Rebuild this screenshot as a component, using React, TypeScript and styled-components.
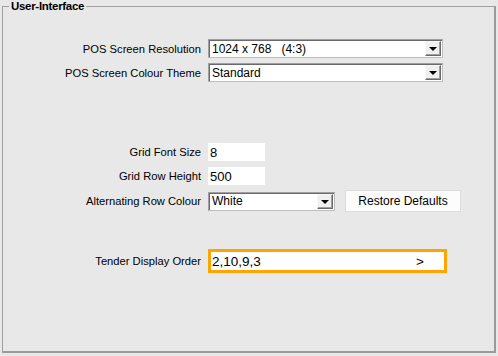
import styled, { createGlobalStyle } from "styled-components";

const GlobalStyle = createGlobalStyle`
    html, body {
        margin: 0;
        padding: 0;
        background: #e8e8e8;
    }
    body {
        font-family: "Liberation Sans", Arial, sans-serif;
        font-size: 12px;
        color: #000;
    }
`;

const Page = styled.div`
    width: 498px;
    height: 356px;
    padding: 0 2px 0 2px;
    box-sizing: border-box;
    overflow: hidden;
`;

const Group = styled.fieldset`
    margin: 0;
    padding: 0;
    width: 494px;
    height: 353px;
    box-sizing: border-box;
    border: 1px solid #a0a0a0;
    border-right: 2px solid #9a9a9a;
    border-bottom: 2px solid #9a9a9a;
    min-width: 0;
`;

const Legend = styled.legend`
    margin-left: 6px;
    padding: 0 2px 0 2px;
    font-size: 11.5px;
    font-weight: bold;
    line-height: 13px;
    letter-spacing: -0.3px;
`;

const Form = styled.div`
    display: flex;
    flex-direction: column;
`;

const Row = styled.div<{ $top: number; $h: number }>`
    display: flex;
    align-items: center;
    margin-top: ${(p) => p.$top}px;
    height: ${(p) => p.$h}px;
`;

const Label = styled.div`
    width: 205px;
    padding-right: 7px;
    box-sizing: border-box;
    text-align: right;
    font-size: 11.2px;
    white-space: nowrap;
`;

const Select = styled.div<{ $w: number }>`
    display: flex;
    align-items: stretch;
    width: ${(p) => p.$w}px;
    height: 19px;
    box-sizing: border-box;
    background: #fff;
    border: 1px solid #a0a0a0;
    border-right-color: #bcbcbc;
    border-bottom-color: #bcbcbc;
    box-shadow: inset 1px 1px 0 #6a6a6a;
`;

const SelectText = styled.div`
    flex: 1;
    padding: 0 0 0 3px;
    display: flex;
    align-items: center;
    white-space: pre;
    font-size: 12px;
`;

const DropButton = styled.div`
    width: 16px;
    margin: 1px 1px 1px 0;
    box-sizing: border-box;
    background: #f0f0f0;
    border-top: 1px solid #f8f8f8;
    border-left: 1px solid #f8f8f8;
    border-right: 1px solid #696969;
    border-bottom: 1px solid #696969;
    box-shadow: inset -1px -1px 0 #a0a0a0;
    display: flex;
    align-items: center;
    justify-content: center;
`;

const Arrow = styled.div`
    width: 0;
    height: 0;
    border-left: 4px solid transparent;
    border-right: 4px solid transparent;
    border-top: 4px solid #000;
    margin: 1px 1px 0 0;
`;

const TextBox = styled.div`
    width: 57px;
    height: 18px;
    background: #fff;
    display: flex;
    align-items: center;
    padding-left: 2px;
    box-sizing: border-box;
    font-size: 13px;
`;

const Button = styled.button`
    margin-left: 10px;
    width: 116px;
    height: 22px;
    background: #fcfcfc;
    border: 1px solid #dcdcdc;
    font-family: "Liberation Sans", Arial, sans-serif;
    font-size: 12px;
    color: #000;
    padding: 0;
`;

const OrderBox = styled.div`
    width: 239px;
    height: 24px;
    box-sizing: border-box;
    border: 3px solid #ffa500;
    background: #fff;
    display: flex;
    align-items: center;
    justify-content: space-between;
    padding: 0 20px 0 1px;
    font-size: 13.5px;
`;

function Dropdown({ width, value }: { width: number; value: string }) {
    return (
        <Select $w={width}>
            <SelectText>{value}</SelectText>
            <DropButton>
                <Arrow />
            </DropButton>
        </Select>
    );
}

export default function App() {
    return (
        <Page>
            <GlobalStyle />
            <Group>
                <Legend>User-Interface</Legend>
                <Form>
                    <Row $top={26} $h={19}>
                        <Label>POS Screen Resolution</Label>
                        <Dropdown width={235} value={"1024 x 768   (4:3)"} />
                    </Row>
                    <Row $top={5} $h={19}>
                        <Label>POS Screen Colour Theme</Label>
                        <Dropdown width={235} value="Standard" />
                    </Row>
                    <Row $top={61} $h={18}>
                        <Label>Grid Font Size</Label>
                        <TextBox>8</TextBox>
                    </Row>
                    <Row $top={6} $h={18}>
                        <Label>Grid Row Height</Label>
                        <TextBox>500</TextBox>
                    </Row>
                    <Row $top={5} $h={22}>
                        <Label>Alternating Row Colour</Label>
                        <Dropdown width={127} value="White" />
                        <Button>Restore Defaults</Button>
                    </Row>
                    <Row $top={37} $h={24}>
                        <Label>Tender Display Order</Label>
                        <OrderBox>
                            <span>2,10,9,3</span>
                            <span>&gt;</span>
                        </OrderBox>
                    </Row>
                </Form>
            </Group>
        </Page>
    );
}
